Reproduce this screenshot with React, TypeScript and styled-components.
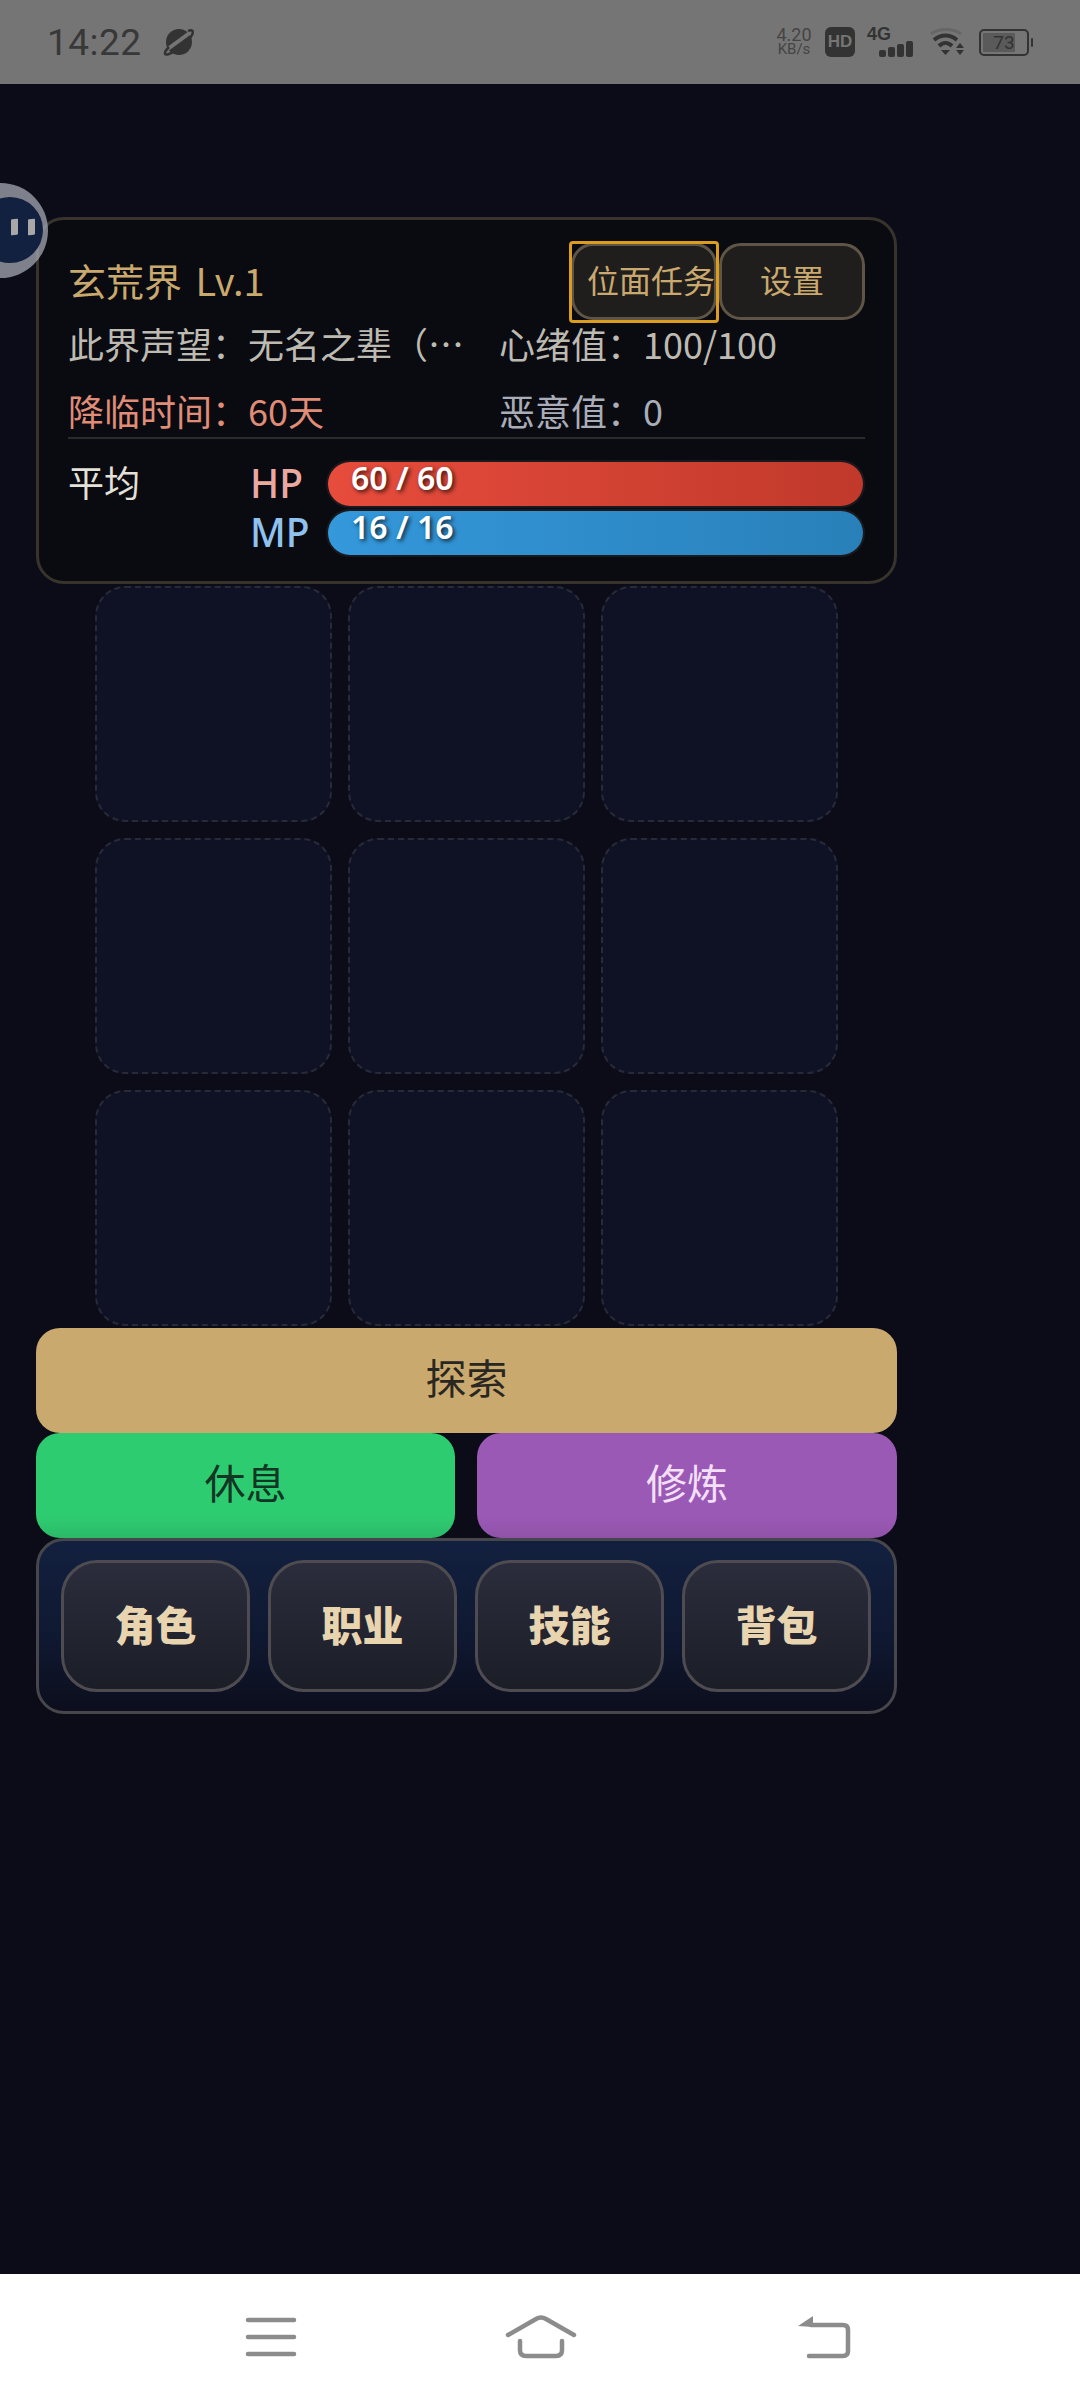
import React from "react";
import styled, { createGlobalStyle } from "styled-components";

const cjk = `"Noto Sans CJK SC", "Noto Sans", sans-serif`;

const GlobalStyle = createGlobalStyle`
  html, body {
    margin: 0;
    padding: 0;
    background: #0b0c18;
  }
  * {
    box-sizing: border-box;
  }
`;

const Page = styled.div`
  width: 1080px;
  height: 2400px;
  display: flex;
  flex-direction: column;
  position: relative;
  overflow: hidden;
  font-family: ${cjk};
  background: #0b0c18;
`;

const StatusBar = styled.div`
  height: 84px;
  flex: none;
  background: #757575;
  display: flex;
  align-items: center;
  justify-content: space-between;
  padding: 0 51px 0 47px;
  color: #383838;
`;

const StatusLeft = styled.div`
  display: flex;
  align-items: center;
  gap: 21px;
`;

const Clock = styled.span`
  font-family: Roboto, sans-serif;
  font-size: 37px;
  letter-spacing: 0.5px;
`;

const StatusRight = styled.div`
  display: flex;
  align-items: center;
`;

const Speed = styled.div`
  display: flex;
  flex-direction: column;
  align-items: center;
  width: 40px;
  font-family: Roboto, sans-serif;
  font-size: 18px;
  line-height: 15px;
  margin-right: 11px;
  color: #444;
  small {
    font-size: 15px;
  }
`;

const HdBadge = styled.div`
  width: 30px;
  height: 30px;
  border-radius: 6px;
  background: #333;
  color: #757575;
  font: 800 17px/30px "Liberation Sans", sans-serif;
  text-align: center;
  margin-right: 12px;
`;

const Signal = styled.div`
  width: 47px;
  margin-right: 16px;
  position: relative;
  height: 30px;
`;

const SignalLabel = styled.span`
  position: absolute;
  left: 0;
  top: -3px;
  font: 700 18px/20px "Liberation Sans", sans-serif;
  color: #333;
`;

const SignalBarsWrap = styled.svg`
  position: absolute;
  left: 0;
  bottom: 0;
`;

const Battery = styled.div`
  width: 50px;
  height: 27px;
  border: 2px solid #333;
  border-radius: 5px;
  margin-left: 14px;
  position: relative;
  font: 400 19px/23px Roboto, sans-serif;
  text-align: center;
  color: #333;
  &::before {
    content: "";
    position: absolute;
    left: 2px;
    top: 2px;
    bottom: 2px;
    width: 32px;
    background: #5a5a5a;
    border-radius: 1px;
  }
  &::after {
    content: "";
    position: absolute;
    right: -6px;
    top: 7px;
    width: 2px;
    height: 9px;
    background: #333;
    border-radius: 1px;
  }
`;

const BatteryLevel = styled.span`
  position: relative;
  z-index: 1;
`;

const Main = styled.main`
  flex: 1;
  padding: 133px 183px 0 36px;
  display: flex;
  flex-direction: column;
`;

const FloatBall = styled.div`
  position: absolute;
  left: -47px;
  top: 183px;
  width: 95px;
  height: 95px;
  border-radius: 50%;
  background: rgba(170, 175, 185, 0.72);
  z-index: 2;
`;

const BallFace = styled.div`
  position: absolute;
  left: 24px;
  top: 14px;
  width: 66px;
  height: 66px;
  border-radius: 50%;
  background: #12213f;
`;

const BallEye = styled.span<{ $x: number }>`
  position: absolute;
  left: ${(p) => p.$x}px;
  top: 22px;
  width: 7px;
  height: 16px;
  background: #a8a8a8;
  border-radius: 1px;
  transform: skewY(-8deg);
`;

const Card = styled.section`
  border: 3px solid #38342c;
  border-radius: 28px;
  background: #0a0a11;
  padding: 22px 29px 0;
  height: 367px;
  display: flex;
  flex-direction: column;
`;

const CardHeader = styled.div`
  display: flex;
  align-items: center;
  justify-content: space-between;
  height: 78px;
`;

const RealmTitle = styled.h1`
  margin: 0 0 3px;
  font-size: 38px;
  font-weight: 400;
  word-spacing: 5px;
  color: #c9a96e;
  line-height: 70px;
`;

const HeaderActions = styled.div`
  display: flex;
  align-items: center;
`;

const GhostButton = styled.button<{ $focused?: boolean }>`
  position: relative;
  width: 146px;
  height: 77px;
  padding: 0 0 5px ${(p) => (p.$focused ? "13px" : "0")};
  border: 3px solid #5e5546;
  border-radius: 22px;
  background: #201e1c;
  color: #c9a96e;
  font-family: ${cjk};
  font-size: 32px;
  white-space: nowrap;
  text-align: ${(p) => (p.$focused ? "left" : "center")};
  margin-left: ${(p) => (p.$focused ? "0" : "2px")};
  ${(p) =>
    p.$focused &&
    `&::after {
      content: "";
      position: absolute;
      inset: -5px -5px -6px -5px;
      border: 3px solid #dc9c1e;
      border-radius: 4px;
    }`}
`;

const InfoGrid = styled.div`
  display: grid;
  grid-template-columns: 395px 1fr;
  column-gap: 36px;
  row-gap: 17px;
  grid-auto-rows: 50px;
  font-size: 36px;
  line-height: 47px;
  border-bottom: 2px solid #2b2b2c;
  height: 119px;
`;

const InfoItem = styled.div<{ $color: string }>`
  color: ${(p) => p.$color};
  white-space: nowrap;
`;

const StatsRow = styled.div`
  display: flex;
  padding-top: 23px;
`;

const AverageLabel = styled.div`
  width: 182px;
  font-size: 36px;
  line-height: 39px;
  color: #e4e1d8;
`;

const Bars = styled.div`
  flex: 1;
  display: flex;
  flex-direction: column;
  gap: 5px;
  margin-right: 2px;
`;

const BarRow = styled.div`
  display: flex;
  align-items: center;
  height: 44px;
`;

const BarLabel = styled.span<{ $color: string }>`
  width: 78px;
  font-family: "Noto Sans", sans-serif;
  font-size: 39px;
  font-weight: 500;
  line-height: 42px;
  margin-bottom: 2px;
  color: ${(p) => p.$color};
`;

const BarTrack = styled.div<{ $fill: string }>`
  flex: 1;
  height: 44px;
  border-radius: 22px;
  background: ${(p) => p.$fill};
  box-shadow: 0 0 0 2px #1a1a1e;
  color: #fff;
  font-family: "Noto Sans", sans-serif;
  font-size: 32px;
  font-weight: 600;
  line-height: 32px;
  padding-left: 23px;
  text-shadow: 2px 2px 4px rgba(0, 0, 0, 0.75);
`;

const SlotGrid = styled.div`
  display: grid;
  grid-template-columns: repeat(3, 237px);
  grid-auto-rows: 236px;
  gap: 16px;
  padding-left: 59px;
  margin: 2px 0;
`;

const Slot = styled.div`
  border: 2px dashed #282a38;
  border-radius: 30px;
  background: #0f1224;
`;

const ActionButton = styled.button<{ $bg: string; $color: string }>`
  width: 100%;
  height: 105px;
  border: none;
  border-radius: 24px;
  background: ${(p) => p.$bg};
  color: ${(p) => p.$color};
  font-family: ${cjk};
  font-size: 41px;
  padding: 0 0 10px;
`;

const ActionRow = styled.div`
  display: grid;
  grid-template-columns: 419px 420px;
  column-gap: 22px;
`;

const NavPanel = styled.nav`
  height: 176px;
  border: 3px solid #47464b;
  border-radius: 28px;
  background: linear-gradient(180deg, #12203f 0%, #0f1830 60%, #0c0e1c 100%);
  display: grid;
  grid-template-columns: repeat(4, 189px);
  gap: 18px;
  padding: 19px 22px;
`;

const NavButton = styled.button`
  border: 3px solid #4e4c50;
  border-radius: 36px;
  background: linear-gradient(180deg, #2b2d3c 0%, #1b1d27 100%);
  color: #e8d5b0;
  font-family: ${cjk};
  font-size: 41px;
  font-weight: 900;
  padding: 0 0 7px;
`;

const BottomBar = styled.div`
  height: 126px;
  flex: none;
  background: #fff;
  display: grid;
  grid-template-columns: 260px 292px 1fr;
  align-items: center;
  padding-left: 245px;
`;

const slots = Array.from({ length: 9 }, (_, i) => i);
const navItems = ["角色", "职业", "技能", "背包"];

const PlanetIcon = () => (
  <svg width="32" height="30" viewBox="0 0 32 30" fill="none">
    <circle cx="16" cy="15" r="13" fill="#333" />
    <path d="M2 24 L28 5" stroke="#757575" strokeWidth="4" />
    <path d="M6 20 C0 26 1 29 6 27 C12 25 26 14 29 8 C31 4 29 2 25 4" stroke="#333" strokeWidth="2.5" />
  </svg>
);

const SignalBars = () => (
  <SignalBarsWrap width="47" height="16" viewBox="0 0 47 16">
    <rect x="12" y="9" width="7" height="7" rx="2" fill="#333" />
    <rect x="21" y="6" width="7" height="10" rx="2" fill="#333" />
    <rect x="30" y="3" width="7" height="13" rx="2" fill="#333" />
    <rect x="39" y="0" width="7" height="16" rx="2" fill="#333" />
  </SignalBarsWrap>
);

const WifiIcon = () => (
  <svg width="35" height="28" viewBox="0 0 35 28" fill="none">
    <path d="M1 6 C9 0 23 0 31 6" stroke="#666" strokeWidth="3" />
    <path d="M4 12 C11 6 20 6 27 12" stroke="#333" strokeWidth="4" />
    <path d="M9 18 C13 14 18 14 22 18" stroke="#333" strokeWidth="4" />
    <path d="M11 22 H20 L15.5 27 Z" fill="#333" />
    <path d="M30 15 L34 20 H26 Z" fill="#333" />
    <path d="M26 22 H34 L30 27 Z" fill="#333" />
  </svg>
);

const MenuIcon = () => (
  <svg width="52" height="40" viewBox="0 0 52 40" fill="none" stroke="#8c8c8c" strokeWidth="4.5" strokeLinecap="round">
    <path d="M3 3 H49" />
    <path d="M3 20 H49" />
    <path d="M3 37 H49" />
  </svg>
);

const HomeIcon = () => (
  <svg width="72" height="44" viewBox="0 0 72 44" fill="none" stroke="#8c8c8c" strokeWidth="4.5" strokeLinecap="round">
    <path d="M3 20 L31 4 Q36 1 41 4 L69 20" />
    <path d="M15 26 V35 Q15 41 21 41 H51 Q57 41 57 35 V26" />
  </svg>
);

const BackIcon = () => (
  <svg width="54" height="44" viewBox="0 0 54 44" fill="none">
    <path d="M14 10 H46 Q51 10 51 15 V36 Q51 41 46 41 H12" stroke="#8c8c8c" strokeWidth="4.5" strokeLinecap="round" />
    <path d="M1 11 L16 1 V12 Z" fill="#8c8c8c" />
  </svg>
);

export default function App() {
  return (
    <Page>
      <GlobalStyle />
      <StatusBar>
        <StatusLeft>
          <Clock>14:22</Clock>
          <PlanetIcon />
        </StatusLeft>
        <StatusRight>
          <Speed>
            4.20
            <small>KB/s</small>
          </Speed>
          <HdBadge>HD</HdBadge>
          <Signal>
            <SignalLabel>4G</SignalLabel>
            <SignalBars />
          </Signal>
          <WifiIcon />
          <Battery>
            <BatteryLevel>73</BatteryLevel>
          </Battery>
        </StatusRight>
      </StatusBar>

      <FloatBall>
        <BallFace>
          <BallEye $x={34} />
          <BallEye $x={51} />
        </BallFace>
      </FloatBall>

      <Main>
        <Card>
          <CardHeader>
            <RealmTitle>玄荒界 Lv.1</RealmTitle>
            <HeaderActions>
              <GhostButton $focused>位面任务</GhostButton>
              <GhostButton>设置</GhostButton>
            </HeaderActions>
          </CardHeader>
          <InfoGrid>
            <InfoItem $color="#bdbab2">此界声望：无名之辈（…</InfoItem>
            <InfoItem $color="#bdbab2">心绪值：100/100</InfoItem>
            <InfoItem $color="#e08d78">降临时间：60天</InfoItem>
            <InfoItem $color="#a9adb8">恶意值：0</InfoItem>
          </InfoGrid>
          <StatsRow>
            <AverageLabel>平均</AverageLabel>
            <Bars>
              <BarRow>
                <BarLabel $color="#eaa9a0">HP</BarLabel>
                <BarTrack $fill="linear-gradient(90deg, #e74c3c, #c0392b)">60 / 60</BarTrack>
              </BarRow>
              <BarRow>
                <BarLabel $color="#8fc2ef">MP</BarLabel>
                <BarTrack $fill="linear-gradient(90deg, #3498db, #2980b9)">16 / 16</BarTrack>
              </BarRow>
            </Bars>
          </StatsRow>
        </Card>

        <SlotGrid>
          {slots.map((slot) => (
            <Slot key={slot} />
          ))}
        </SlotGrid>

        <ActionButton $bg="#c9a96e" $color="#2a2621">探索</ActionButton>
        <ActionRow>
          <ActionButton $bg="linear-gradient(180deg, #2ecc71 80%, #2bb968 100%)" $color="#123524">休息</ActionButton>
          <ActionButton $bg="linear-gradient(180deg, #9b59b6 80%, #8f52a8 100%)" $color="#f3e0f8">修炼</ActionButton>
        </ActionRow>
        <NavPanel>
          {navItems.map((item) => (
            <NavButton key={item}>{item}</NavButton>
          ))}
        </NavPanel>
      </Main>

      <BottomBar>
        <MenuIcon />
        <HomeIcon />
        <BackIcon />
      </BottomBar>
    </Page>
  );
}
